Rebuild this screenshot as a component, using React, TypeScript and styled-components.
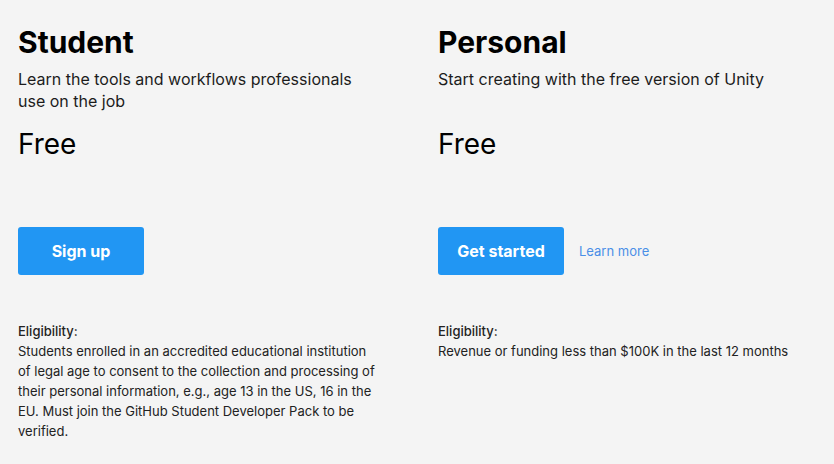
import React from "react";
import styled, { createGlobalStyle } from "styled-components";

const Global = createGlobalStyle`
  html, body { margin: 0; padding: 0; background: #f4f4f4; }
  body { font-family: Inter, "Noto Sans", sans-serif; color: #1a1a1a; }
  * { box-sizing: border-box; }
`;

const Page = styled.div`
  display: grid;
  grid-template-columns: 380px 380px;
  column-gap: 40px;
  padding: 24px 18px 0 18px;
  min-height: 464px;
  background: #f4f4f4;
`;

const Plan = styled.section`
  display: flex;
  flex-direction: column;
`;

const Title = styled.h2`
  margin: 0;
  font-size: 30px;
  line-height: 36px;
  font-weight: 700;
  color: #000;
`;

const Desc = styled.p`
  margin: 8px 0 0 0;
  font-size: 16px;
  line-height: 22px;
  min-height: 44px;
  color: #1c1c1c;
  max-width: 360px;
`;

const Price = styled.div`
  margin-top: 15px;
  font-size: 28px;
  line-height: 34px;
  font-weight: 400;
  color: #000;
`;

const Actions = styled.div`
  display: flex;
  align-items: center;
  gap: 15px;
  margin-top: 66px;
`;

const Button = styled.a`
  display: inline-flex;
  align-items: center;
  justify-content: center;
  width: 126px;
  height: 48px;
  border-radius: 3px;
  background: #2196f3;
  color: #fff;
  font-size: 16px;
  font-weight: 700;
  text-decoration: none;
`;

const TextLink = styled.a`
  font-size: 13px;
  color: #4a8fe7;
  text-decoration: none;
`;

const Eligibility = styled.div`
  margin-top: 46px;
  max-width: 360px;
  font-size: 13px;
  line-height: 20px;
  color: #222;
`;

const EligLabel = styled.div`
  font-weight: 500;
`;

const plans = [
  {
    title: "Student",
    desc: "Learn the tools and workflows professionals use on the job",
    cta: "Sign up",
    link: null as string | null,
    elig: "Students enrolled in an accredited educational institution of legal age to consent to the collection and processing of their personal information, e.g., age 13 in the US, 16 in the EU. Must join the GitHub Student Developer Pack to be verified.",
  },
  {
    title: "Personal",
    desc: "Start creating with the free version of Unity",
    cta: "Get started",
    link: "Learn more",
    elig: "Revenue or funding less than $100K in the last 12 months",
  },
];

export default function App() {
  return (
    <>
      <Global />
      <Page>
        {plans.map((p) => (
          <Plan key={p.title}>
            <Title>{p.title}</Title>
            <Desc>{p.desc}</Desc>
            <Price>Free</Price>
            <Actions>
              <Button href="#">{p.cta}</Button>
              {p.link && <TextLink href="#">{p.link}</TextLink>}
            </Actions>
            <Eligibility>
              <EligLabel>Eligibility:</EligLabel>
              {p.elig}
            </Eligibility>
          </Plan>
        ))}
      </Page>
    </>
  );
}
